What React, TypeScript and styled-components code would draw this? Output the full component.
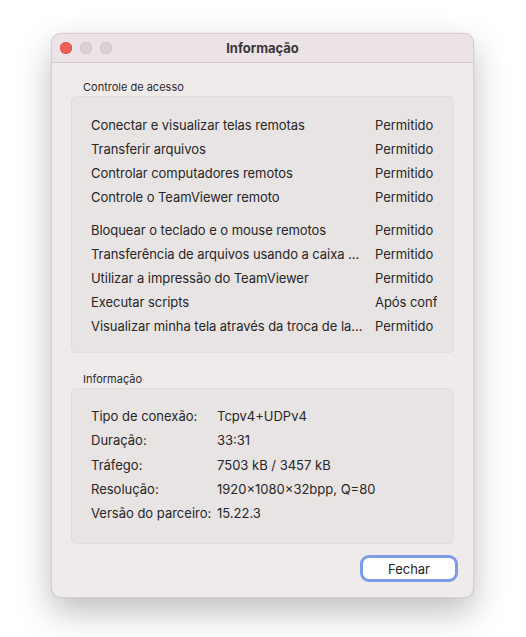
import React from 'react'
import styled, { createGlobalStyle } from 'styled-components'

const GlobalStyle = createGlobalStyle`
  html, body {
    margin: 0;
    padding: 0;
    background: #ffffff;
  }
  body {
    font-family: Inter, "Liberation Sans", Arial, sans-serif;
    -webkit-font-smoothing: antialiased;
  }
`

const Page = styled.div`
  width: 526px;
  height: 637px;
  padding: 33px 0 0 51px;
  box-sizing: border-box;
`

const Window = styled.div`
  width: 423px;
  height: 565px;
  display: flex;
  flex-direction: column;
  background: #f0ebeb;
  border-radius: 10px;
  border: 1px solid #d6d0d2;
  box-sizing: border-box;
  overflow: hidden;
  box-shadow: 0 14px 34px rgba(0, 0, 0, 0.26), 0 0 1px rgba(0, 0, 0, 0.25);
`

const TitleBar = styled.div`
  position: relative;
  height: 28px;
  flex-shrink: 0;
  display: flex;
  align-items: center;
  justify-content: center;
  background: #ebe3e5;
  border-bottom: 1px solid #d2cbce;
`

const Lights = styled.div`
  position: absolute;
  left: 8px;
  top: 8px;
  display: flex;
  gap: 8px;
`

const Light = styled.span<{ $color: string; $edge: string }>`
  width: 12px;
  height: 12px;
  border-radius: 50%;
  background: ${(p) => p.$color};
  box-shadow: inset 0 0 0 0.5px ${(p) => p.$edge};
`

const Title = styled.div`
  font-size: 13px;
  font-weight: 700;
  color: #3b3638;
`

const Body = styled.div`
  flex: 1;
  display: flex;
  flex-direction: column;
  padding: 17px 19px 0 19px;
`

const GroupLabel = styled.div<{ $top?: number }>`
  font-size: 11px;
  color: #2a2a2a;
  padding-left: 12px;
  margin-top: ${(p) => p.$top ?? 0}px;
  height: 15px;
  line-height: 15px;
`

const GroupBox = styled.div<{ $pt: number; $pb: number }>`
  margin-top: 1px;
  background: #e9e4e4;
  border: 1px solid #e2dcdc;
  border-radius: 5px;
  padding: ${(p) => p.$pt}px 16px ${(p) => p.$pb}px 19px;
`

const AccessRow = styled.div<{ $gap?: boolean }>`
  display: grid;
  grid-template-columns: 274px 62px;
  column-gap: 10px;
  height: 24px;
  align-items: center;
  margin-top: ${(p) => (p.$gap ? 9 : 0)}px;
  font-size: 13px;
  letter-spacing: -0.05px;
  color: #262626;
`

const Cell = styled.span<{ $ellipsis?: boolean }>`
  white-space: nowrap;
  overflow: hidden;
  text-overflow: ${(p) => (p.$ellipsis ? 'ellipsis' : 'clip')};
`

const InfoRow = styled.div`
  display: grid;
  grid-template-columns: 126px 1fr;
  height: 24.25px;
  align-items: center;
  font-size: 13px;
  color: #262626;
`

const Footer = styled.div`
  display: flex;
  justify-content: flex-end;
  padding: 14px 0 0 0;
  margin-right: -1px;
`

const Button = styled.button`
  width: 92px;
  height: 21px;
  border-radius: 6px;
  background: #ffffff;
  border: none;
  box-shadow: 0 0 0 3px #7b9be6;
  font-family: inherit;
  font-size: 13px;
  color: #222;
  padding: 0;
`

const access: [string, string][] = [
  ['Conectar e visualizar telas remotas', 'Permitido'],
  ['Transferir arquivos', 'Permitido'],
  ['Controlar computadores remotos', 'Permitido'],
  ['Controle o TeamViewer remoto', 'Permitido'],
  ['Bloquear o teclado e o mouse remotos', 'Permitido'],
  ['Transferência de arquivos usando a caixa de arquivos', 'Permitido'],
  ['Utilizar a impressão do TeamViewer', 'Permitido'],
  ['Executar scripts', 'Após confirmação'],
  ['Visualizar minha tela através da troca de lados', 'Permitido'],
]

const info: [string, string][] = [
  ['Tipo de conexão:', 'Tcpv4+UDPv4'],
  ['Duração:', '33:31'],
  ['Tráfego:', '7503 kB / 3457 kB'],
  ['Resolução:', '1920×1080×32bpp, Q=80'],
  ['Versão do parceiro:', '15.22.3'],
]

export default function App() {
  return (
    <Page>
      <GlobalStyle />
      <Window>
        <TitleBar>
          <Lights>
            <Light $color="#ec5f57" $edge="#d2463e" />
            <Light $color="#d8d2d5" $edge="#c3bcc0" />
            <Light $color="#d8d2d5" $edge="#c3bcc0" />
          </Lights>
          <Title>Informação</Title>
        </TitleBar>
        <Body>
          <GroupLabel>Controle de acesso</GroupLabel>
          <GroupBox $pt={16} $pb={14}>
            {access.map(([name, value], i) => (
              <AccessRow key={name} $gap={i === 4}>
                <Cell $ellipsis>{name}</Cell>
                <Cell>{value}</Cell>
              </AccessRow>
            ))}
          </GroupBox>
          <GroupLabel $top={19}>Informação</GroupLabel>
          <GroupBox $pt={15} $pb={18}>
            {info.map(([label, value]) => (
              <InfoRow key={label}>
                <span>{label}</span>
                <span>{value}</span>
              </InfoRow>
            ))}
          </GroupBox>
          <Footer>
            <Button>Fechar</Button>
          </Footer>
        </Body>
      </Window>
    </Page>
  )
}
